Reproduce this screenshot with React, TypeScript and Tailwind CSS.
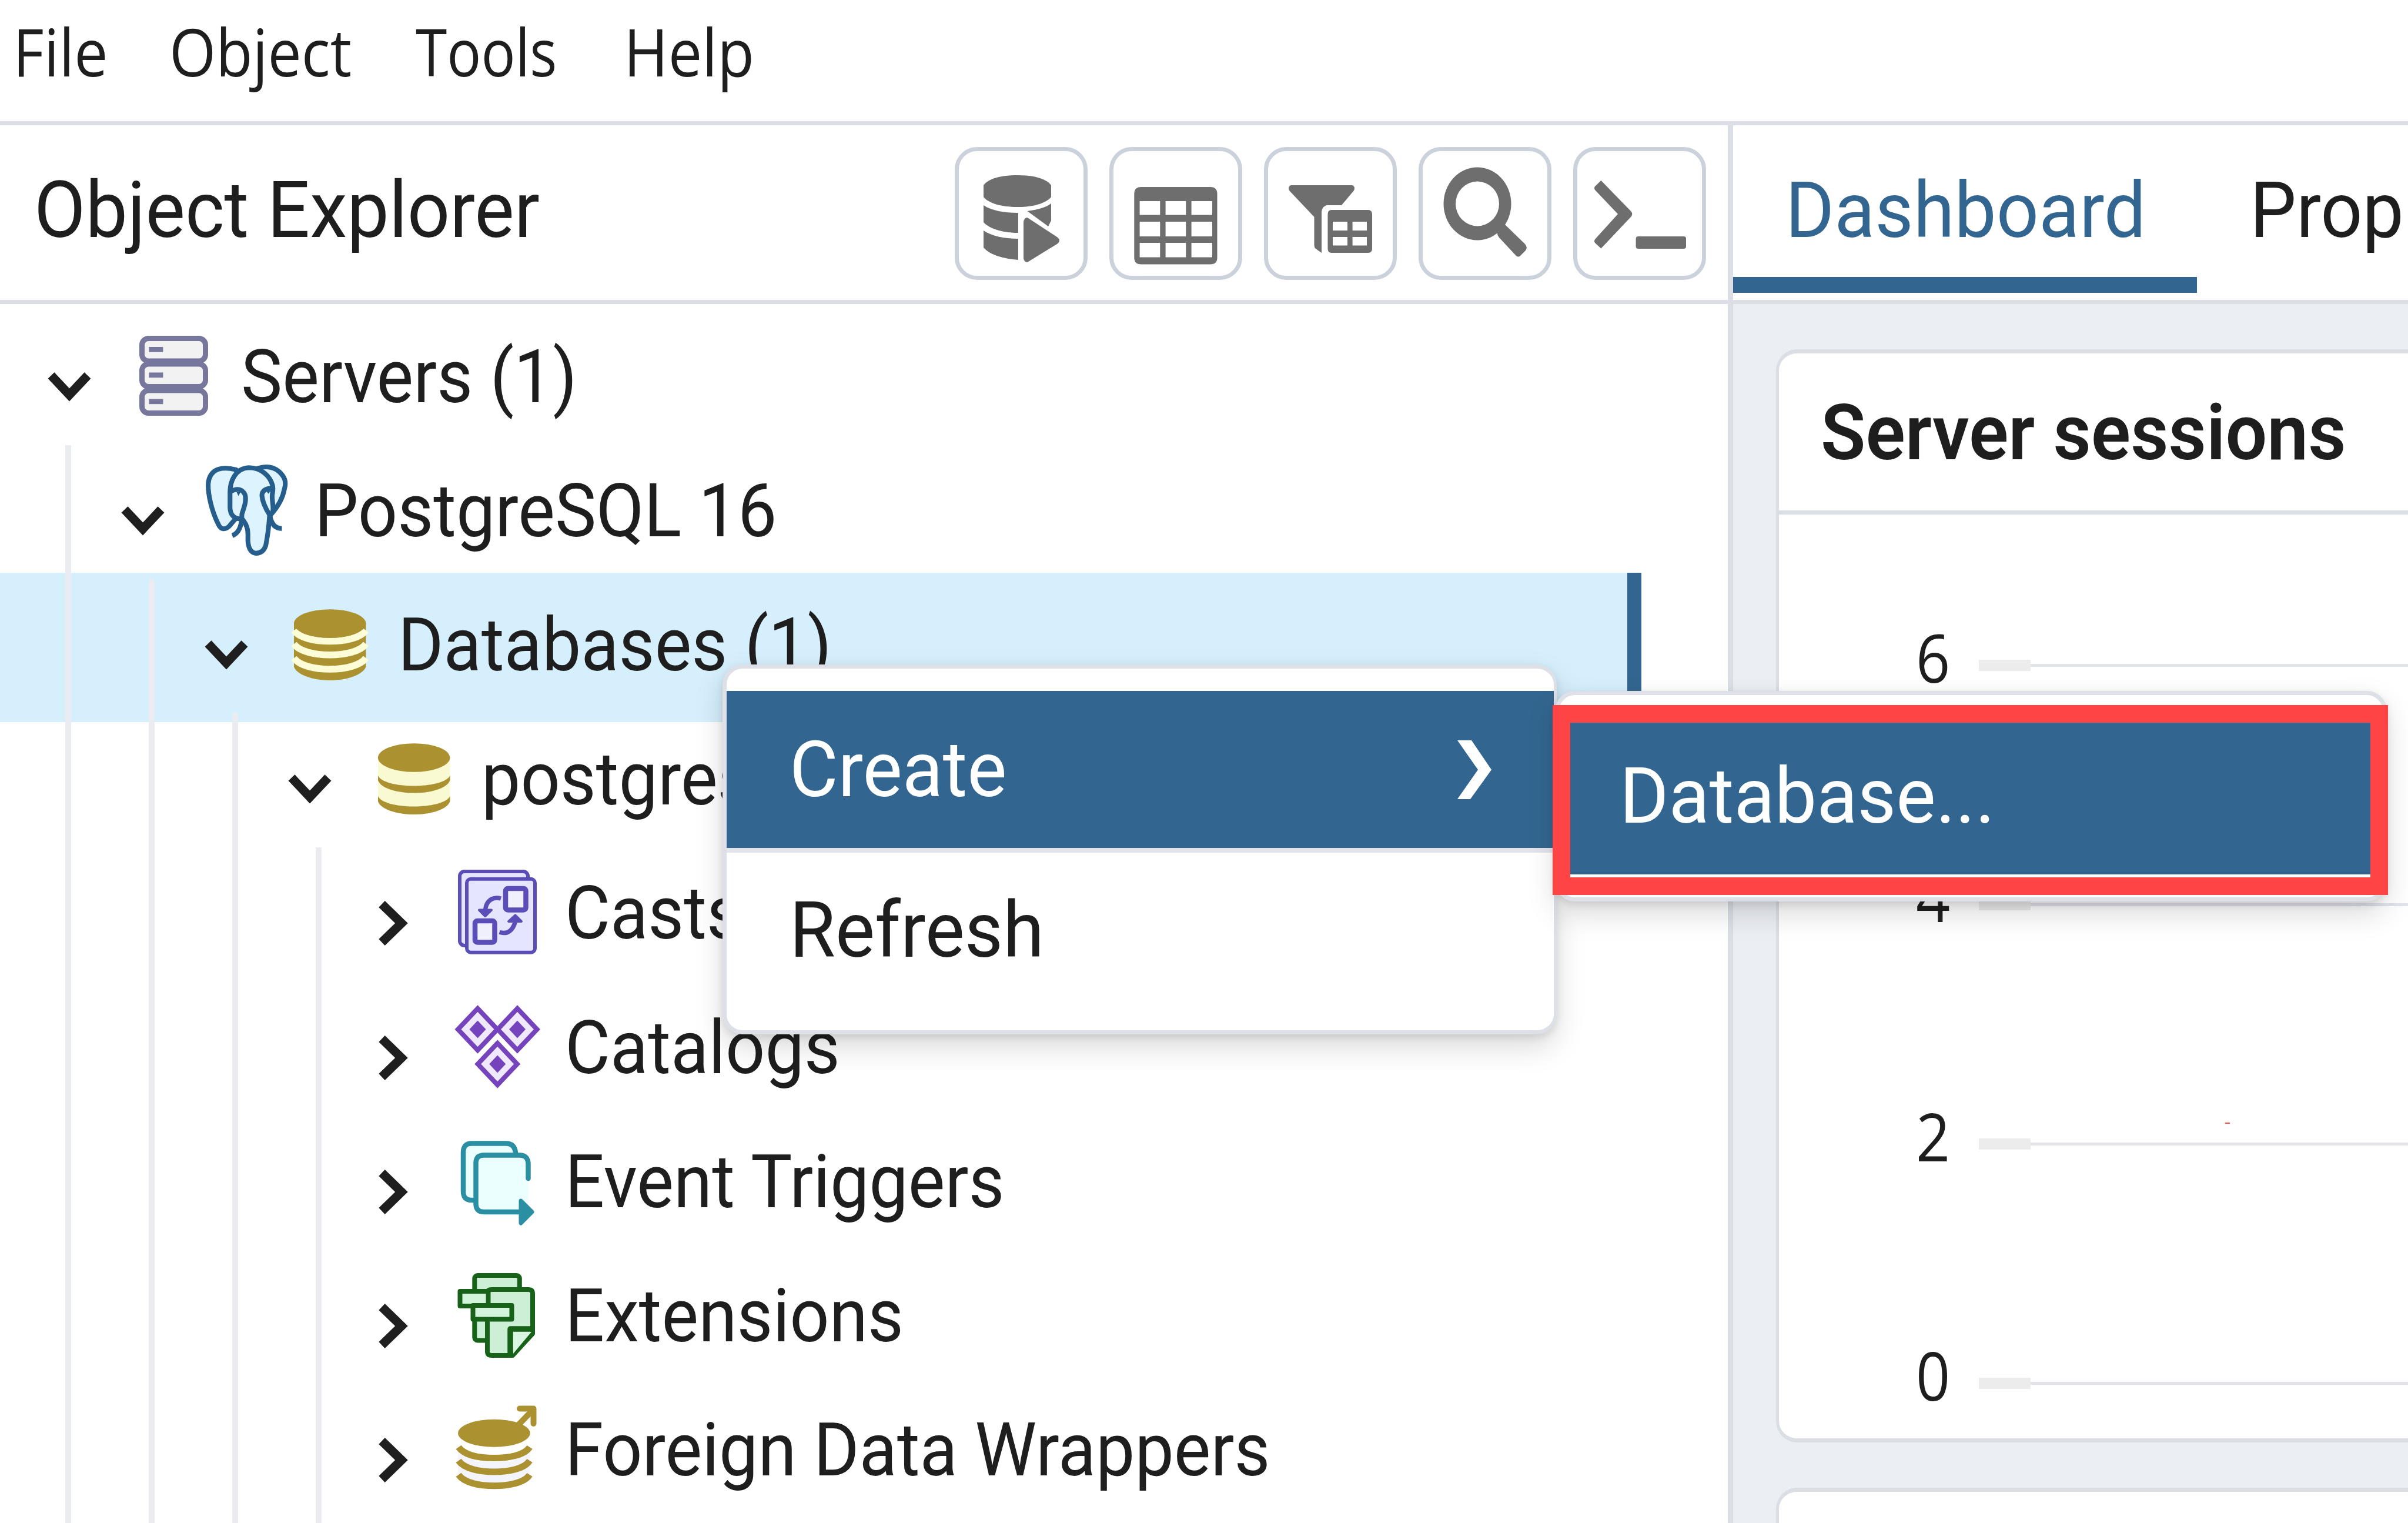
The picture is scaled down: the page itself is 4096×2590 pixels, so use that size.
import type { ReactNode } from "react";

const ROBOTO = "font-['Roboto','Liberation_Sans',sans-serif]";
const OPEN = "font-['Open_Sans','Noto_Sans',sans-serif]";

/* ---------- toolbar icons ---------- */

function QueryToolIcon() {
  return (
    <g>
      <path d="M49 65C58 53 80 48 106.500 48S155 53 164 65V85C155 96 133 102 106.500 102S58 96 49 85Z" />
      <path d="M49 99C62 108 84 112 108 112V146C84 146 60 140 49 128Z" />
      <path d="M164 96V125L159 135L123.500 109C140 107 155 103 164 96Z" />
      <path d="M49 142C62 151 84 156 108 156V192C84 190 60 184 49 171Z" />
      <path d="M117 128Q118 120 123.500 120L174 153Q182 159 174 165L123.500 196Q118 196 117 189Z" />
    </g>
  );
}

function ViewDataIcon() {
  return (
    <path
      fillRule="evenodd"
      d="M54 68H172Q183.500 68 183.500 80V188Q183.500 199.500 172 199.500H54Q42.300 199.500 42.300 188V80Q42.300 68 54 68ZM51.600 92V115.500H86.300V92ZM95.600 92V115.500H130.300V92ZM139.600 92V115.500H175V92ZM51.600 127V152H86.300V127ZM95.600 127V152H130.300V127ZM139.600 127V152H175V127ZM51.600 163V187.400H86.300V163ZM95.600 163V187.400H130.300V163ZM139.600 163V187.400H175V163Z"
    />
  );
}

function FilteredRowsIcon() {
  return (
    <g>
      <path d="M46 65H150Q156 67 153 74L132 99H107Q99 101 98 110V180L88 173Q85.500 171 85.500 167V119L43 74Q40 67 46 65Z" />
      <path
        fillRule="evenodd"
        d="M114 107H178Q184 108 184 114V173Q184 179 178 180H114Q108.500 179 108.500 173V114Q108.500 108 114 107ZM117 127V142H142V127ZM150.600 127V142H175V127ZM117 153V167.500H142V153ZM150.600 153V167.500H175V153Z"
      />
    </g>
  );
}

function SearchIcon() {
  return (
    <g>
      <path
        fillRule="evenodd"
        d="M42.500 96.500A57.500 62 0 1 1 157.500 96.500A57.500 62 0 1 1 42.500 96.500ZM63 96.500A37 38 0 1 0 137 96.500A37 38 0 1 0 63 96.500Z"
      />
      <path d="M134 143L146 131L181 165Q186 171 182 176L173 185Q170 188 166 185L137 154Q133 149 134 143Z" />
    </g>
  );
}

function PsqlIcon() {
  return (
    <g>
      <path d="M47.400 57L98 109Q102.500 114 98 119L47.400 172.500L37 163Q35 160 37 157L76 114L37 73Q35 70 37 67Z" />
      <rect x="106.600" y="152" width="85.400" height="21" rx="4" />
    </g>
  );
}

function ToolButton({ children }: { children: ReactNode }) {
  return (
    <button className="h-[226px] w-[226px] shrink-0 rounded-[38px] border-[7px] border-[#ccd2dc] bg-white">
      <svg viewBox="7 7 212 212" className="block h-full w-full" fill="#6e6e6e">
        {children}
      </svg>
    </button>
  );
}

/* ---------- tree icons, drawn in a 160 x 228 row cell ---------- */

function ServersIcon() {
  return (
    <g fill="#f2f2f2" stroke="#77769c" strokeWidth="9">
      {[46.5, 90, 135].map((y) => (
        <g key={y}>
          <rect x="26.500" y={y} width="108" height="38.500" rx="11" />
          <rect x="38.400" y={y + 14.5} width="24" height="8.700" fill="#77769c" stroke="none" />
        </g>
      ))}
    </g>
  );
}

function ElephantIcon() {
  return (
    <g transform="translate(-0.9 21.6) scale(.21267)" fill="#ddf3fd" stroke="#255e8c" strokeWidth="38" strokeLinejoin="round">
      <path d="M300 95C230 78 160 78 118 112C78 148 72 195 76 245C84 350 120 460 157 532C175 575 212 578 245 545C262 525 275 508 295 488L340 400Z" />
      <path d="M470 85C530 65 590 68 640 108C688 152 702 190 686 245C672 325 630 395 575 455L520 300Z" />
      <path d="M330 488C275 485 252 450 250 400V270C252 190 290 84 400 78C500 78 570 145 590 220C598 250 590 275 587 300C585 350 603 400 590 435L566 465C560 560 548 640 536 700C522 745 490 762 458 763C410 760 397 715 393 665C393 600 400 555 352 495Z" />
      <path d="M255 268C310 240 350 250 370 295C385 345 360 400 345 450C345 530 330 600 268 622" fill="none" />
      <path d="M590 245C545 238 505 262 505 300C510 370 550 430 570 462C580 530 610 565 665 565" fill="none" />
      <path d="M302 272H334L318 306ZM538 262H578L556 288Z" fill="#255e8c" stroke="none" />
    </g>
  );
}

function DatabasesIcon() {
  return (
    <g transform="translate(0 1)">
      <path d="M19 74V148C24 162 52 171 80 171S136 162 141.500 148V74Z" fill="#ab9130" />
      <g fill="none" stroke="#fcfcd6" strokeWidth="11.500">
        <path d="M19 86C28 99 54 104.500 80 104.500S132 99 141.500 86" />
        <path d="M19 109C28 122 54 127.700 80 127.700S132 122 141.500 109" />
        <path d="M19 133C28 146 54 152 80 152S132 146 141.500 133" />
      </g>
      <ellipse cx="80.200" cy="74.500" rx="61.300" ry="24.300" fill="#ab9130" />
    </g>
  );
}

function DatabaseIcon() {
  return (
    <g transform="translate(0 1)">
      <path d="M19 74V146C24 160 52 170 80 170S136 160 141.500 146V74Z" fill="#f9f9d2" />
      <path d="M19 105V113C24 127 52 134.500 80 134.500S136 127 141.500 113V105C136 116 110 122.500 80 122.500S24 116 19 105Z" fill="#ab9130" />
      <path d="M19 140V149C24 163 52 171 80 171S136 163 141.500 149V140C136 151 110 157.500 80 157.500S24 151 19 140Z" fill="#ab9130" />
      <ellipse cx="80.200" cy="74.500" rx="61.300" ry="24.300" fill="#ab9130" />
    </g>
  );
}

function CastsIcon() {
  return (
    <g fill="#e6e5ff" stroke="#5a4db8" strokeWidth="6">
      <rect x="16" y="41" width="116" height="126" rx="8" />
      <rect x="28" y="53.800" width="116" height="125" rx="7" />
      <rect x="94" y="70" width="34.500" height="36.500" rx="4" strokeWidth="8.500" fill="#f0f0fd" />
      <rect x="42" y="125" width="33.500" height="36.500" rx="4" strokeWidth="8.500" fill="#f0f0fd" />
      <path d="M86 87C72 83 61 91 59.500 106" fill="none" strokeWidth="7.500" />
      <path d="M83.600 144.300C98 149 107 140 110.500 126" fill="none" strokeWidth="7.500" />
      <path d="M49 106.500H70L59.300 117ZM99 126H121L110.500 115.500Z" fill="#5a4db8" strokeWidth="4" strokeLinejoin="round" />
    </g>
  );
}

function CatalogsIcon() {
  return (
    <g>
      {[
        [46.5, 80.5],
        [114, 80.5],
        [80.2, 139.5],
      ].map(([x, y]) => (
        <g key={`${x}-${y}`} transform={`translate(${x} ${y})`}>
          <path d="M0 -35.500L33.500 0L0 35.500L-33.500 0Z" fill="#f0e8fd" stroke="#7543bb" strokeWidth="8" />
          <path d="M0 -15L14 0L0 15L-14 0Z" fill="#7543bb" />
        </g>
      ))}
    </g>
  );
}

function EventTriggersIcon() {
  return (
    <g fill="#ebffff" stroke="#2b8fa3" strokeWidth="8.500">
      <path d="M111 70V62Q109 46.500 95 46.500H36Q22 46.500 22 62V128Q22 143 36 143H48V70Z" />
      <path d="M43.500 80Q43.500 66.500 57 66.500H118Q132.500 66.500 132.500 81V163H57Q43.500 163 43.500 149Z" stroke="none" />
      <path d="M132.500 106V82Q132.500 66.500 118 66.500H57Q43.500 66.500 43.500 80V149Q43.500 163 57 163H120" strokeLinecap="round" fill="none" />
      <path d="M120 144L139 163L120 182Z" fill="#2b8fa3" strokeWidth="7" strokeLinejoin="round" />
    </g>
  );
}

function ExtensionsIcon() {
  return (
    <g fill="#ccefd6" stroke="#176218" strokeWidth="8" strokeLinejoin="round">
      <rect x="41.300" y="43" width="76.500" height="110.500" rx="5" />
      <path d="M70 67H133Q140 67 140 74V142L106 179H70Q63 179 63 172V74Q63 67 70 67Z" />
      <path d="M140 134H102V179" fill="none" strokeWidth="9.500" />
      <path d="M107 139H138L107 176Z" fill="#d9f6e2" stroke="none" />
      <rect x="16.500" y="70" width="48" height="25" fill="#d2f5dc" />
      <rect x="38.500" y="94" width="66" height="23.500" fill="#d2f5dc" />
    </g>
  );
}

function ForeignDataIcon() {
  return (
    <g stroke="#ab9130" fill="none">
      <path d="M13 108C22 126 48 132 74.400 132S127 126 135.700 108V152C127 168 100 174 74.400 174S22 168 13 152Z" fill="#f4f5fc" stroke="none" />
      <g strokeWidth="11">
        <path d="M14 107C24 121 50 125.500 74.400 125.500S126 121 135 107" />
        <path d="M14 130C24 144 50 149 74.400 149S126 144 135 130" />
        <path d="M14 154C24 168 50 172.700 74.400 172.700S126 168 135 154" />
      </g>
      <ellipse cx="74.400" cy="83.300" rx="61.300" ry="23.500" fill="#ab9130" stroke="none" />
      <path d="M114 71L141 43" strokeWidth="10" />
      <path d="M118 41.500H141.500V67" strokeWidth="10" strokeLinecap="round" strokeLinejoin="round" />
    </g>
  );
}

/* ---------- tree ---------- */

type Row = {
  label: string;
  icon: ReactNode;
  indent: string;
  guides: number;
  open?: boolean;
  selected?: boolean;
};

const rows: Row[] = [
  { label: "Servers (1)", icon: <ServersIcon />, indent: "pl-[78px]", guides: 0, open: true },
  { label: "PostgreSQL 16", icon: <ElephantIcon />, indent: "pl-[202.500px]", guides: 1, open: true },
  { label: "Databases (1)", icon: <DatabasesIcon />, indent: "pl-[344.500px]", guides: 2, open: true, selected: true },
  { label: "postgres", icon: <DatabaseIcon />, indent: "pl-[487px]", guides: 3, open: true },
  { label: "Casts", icon: <CastsIcon />, indent: "pl-[629px]", guides: 4 },
  { label: "Catalogs", icon: <CatalogsIcon />, indent: "pl-[629px]", guides: 4 },
  { label: "Event Triggers", icon: <EventTriggersIcon />, indent: "pl-[629px]", guides: 4 },
  { label: "Extensions", icon: <ExtensionsIcon />, indent: "pl-[629px]", guides: 4 },
  { label: "Foreign Data Wrappers", icon: <ForeignDataIcon />, indent: "pl-[629px]", guides: 4 },
];

function Guides({ count }: { count: number }) {
  return (
    <div className="absolute top-0 left-[111px] z-10 flex h-full gap-[132px]">
      {Array.from({ length: count }, (_, i) => (
        <div key={i} className="h-full w-[10px] bg-[#ebecf1]" />
      ))}
    </div>
  );
}

function TreeRow({ row }: { row: Row }) {
  return (
    <div className="relative h-[228.2px] shrink-0">
      {row.selected && (
        <div className="absolute -top-[11px] left-0 h-[254px] w-[2792px] border-r-[24px] border-[#326690] bg-[#d6effc]" />
      )}
      <Guides count={row.guides} />
      <div className={`relative z-10 flex h-full items-start ${row.indent}`}>
        <svg viewBox="0 0 80 80" className="mt-[89px] h-[80px] w-[80px] shrink-0" fill="none" stroke="#1f1f1f" strokeWidth="15">
          {row.open ? <path d="M9 20.500L40 53.500L71 20.500" /> : <path d="M20.500 7.500L54 40L20.500 72.500" />}
        </svg>
        <svg viewBox="0 0 160 228" className="ml-[56.500px] h-[228px] w-[160px] shrink-0">
          {row.icon}
        </svg>
        <span className="ml-[35.500px] origin-left scale-x-[0.931] text-[127px] leading-[223px] whitespace-nowrap">{row.label}</span>
      </div>
    </div>
  );
}

/* ---------- page ---------- */

export default function App() {
  return (
    <div className={`relative flex h-[2590px] w-[4096px] flex-col overflow-hidden bg-white text-[#1e1e1e] ${ROBOTO}`}>
      <nav className={`flex h-[213px] shrink-0 border-b-[7px] border-[#dbdee5] pl-[22px] text-[111.500px] leading-[174px] ${OPEN}`}>
        <span className="w-[266px] origin-left scale-x-[0.915]">File</span>
        <span className="w-[419px] origin-left scale-x-[0.915]">Object</span>
        <span className="w-[354px] origin-left scale-x-[0.868]">Tools</span>
        <span className="origin-left scale-x-[0.92]">Help</span>
      </nav>

      <div className="flex min-h-0 flex-1">
        <aside className="flex w-[2948px] shrink-0 flex-col border-r-[9px] border-[#dbdee5]">
          <header className="flex h-[304px] shrink-0 items-start justify-between border-b-[7px] border-[#dbdee5] pr-[37px] pl-[57.500px]">
            <h1 className="origin-left scale-x-[0.957] text-[133px] leading-[289px]">Object Explorer</h1>
            <div className="mt-[37px] flex gap-[37px]">
              <ToolButton><QueryToolIcon /></ToolButton>
              <ToolButton><ViewDataIcon /></ToolButton>
              <ToolButton><FilteredRowsIcon /></ToolButton>
              <ToolButton><SearchIcon /></ToolButton>
              <ToolButton><PsqlIcon /></ToolButton>
            </div>
          </header>
          <div className="flex min-h-0 flex-1 flex-col overflow-hidden pt-[11.600px]">
            {rows.map((r) => (
              <TreeRow key={r.label} row={r} />
            ))}
            <div className="relative min-h-0 flex-1">
              <Guides count={4} />
            </div>
          </div>
        </aside>

        <main className="flex min-w-0 flex-1 flex-col bg-[#ebeef3]">
          <div className="flex h-[304px] shrink-0 border-b-[7px] border-[#dbdee5] bg-white text-[132.500px] leading-[289px]">
            <div className="h-[285px] w-[789px] shrink-0 border-b-[27px] border-[#326690] pl-[88.500px] text-[#326690]">
              <div className="origin-left scale-x-[0.957]">Dashboard</div>
            </div>
            <div className="ml-[89.500px] w-[264px] origin-left scale-x-[0.945]">Prop</div>
          </div>
          <div className="flex flex-1 flex-col gap-[77px] pt-[77px] pl-[73px]">
            <section className="h-[1859px] shrink-0 rounded-l-[36px] border-y-[7px] border-l-[5px] border-[#dbdee5] bg-white">
              <h2 className="h-[274px] border-b-[7px] border-[#dbdee5] pl-[70.500px] text-[132.500px] leading-[269px] font-semibold">
                <span className="inline-block origin-left scale-x-[0.945]">Server sessions</span>
              </h2>
              <div className="flex flex-col gap-[307px] pt-[206.500px]">
                {["6", "4", "2", "0"].map((n) => (
                  <div key={n} className="flex h-[100px] items-center">
                    <span className={`ml-[212px] w-[100px] scale-x-[0.9] pb-[30px] text-center text-[113px] leading-[100px] ${OPEN}`}>{n}</span>
                    <div className="ml-[28px] h-[19px] w-[88px] bg-[#ececec]" />
                    <div className="h-[5px] flex-1 bg-[#e2e4ea]" />
                  </div>
                ))}
              </div>
            </section>
            <section className="h-[400px] shrink-0 rounded-l-[36px] border-y-[7px] border-l-[5px] border-[#dbdee5] bg-white" />
          </div>
        </main>
      </div>

      {/* stray annotation mark */}
      <div className="absolute top-[1909px] left-[3785px] h-[2px] w-[8px] bg-[#fe4444]" />

      {/* context menu */}
      <div className="absolute top-[1130px] left-[1229px] z-20 h-[629px] w-[1419px] rounded-[34px] border-[7px] border-r-[5px] border-[#dde0e7] bg-white pt-[38px] text-[132.500px] shadow-[0_21px_49px_rgba(0,0,0,0.15),0_5px_14px_rgba(0,0,0,0.1)]">
        <div className="flex h-[267px] items-center justify-between bg-[#326690] pr-[106px] pl-[106.500px] text-white">
          <span className="origin-left scale-x-[0.958] leading-[267px]">Create</span>
          <svg viewBox="0 0 58 100" className="h-[100px] w-[58px]" fill="#fff">
            <path d="M0 0H24L58 50L22 100H0L35 50Z" />
          </svg>
        </div>
        <div className="h-[8px] bg-[#e3e4eb]" />
        <div className="ml-[106.500px] origin-left scale-x-[0.955] leading-[264px]">Refresh</div>
      </div>

      {/* submenu */}
      <div className="absolute top-[1175px] left-[2645px] z-30 h-[358px] w-[1415px] rounded-[34px] border-[7px] border-[#dde0e7] bg-white pt-[38px] text-[132.500px] shadow-[0_21px_49px_rgba(0,0,0,0.15),0_5px_14px_rgba(0,0,0,0.1)]">
        <div className="h-[267px] bg-[#326690] pl-[103px] leading-[268px] text-white">
          <div className="origin-left scale-x-[0.961]">Database...</div>
        </div>
      </div>
      <div className="absolute top-[1199px] left-[2641px] z-40 h-[323px] w-[1421px] border-[30px] border-[#fe4444]" />
    </div>
  );
}
